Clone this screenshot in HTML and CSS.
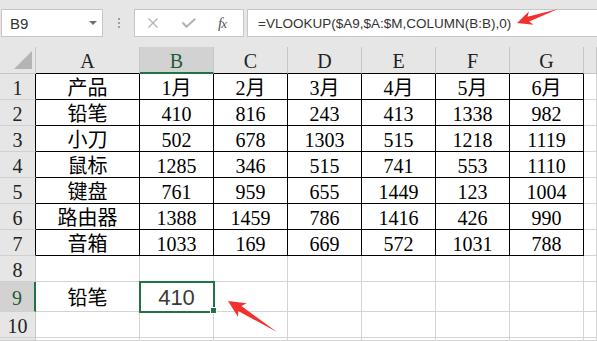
FILE: index.html
```html
<!DOCTYPE html>
<html>
<head>
<meta charset="utf-8">
<link rel="stylesheet" href="styles.css">
</head>
<body>
<div class="toolbar">
  <div class="namebox"><span>B9</span><span class="caret"></span></div>
  <div class="sep"><i></i><i></i><i></i></div>
  <div class="fbtns">
    <svg class="ic-x" width="10" height="10" viewBox="0 0 10 10"><path d="M0.5 0.5L9.5 9.5M9.5 0.5L0.5 9.5" stroke="#b4b4b4" stroke-width="1.4" fill="none"/></svg>
    <svg class="ic-ok" width="14" height="10" viewBox="0 0 14 10"><path d="M0.5 4.5L4.5 8.8L13.3 0.7" stroke="#b4b4b4" stroke-width="2" fill="none"/></svg>
    <span class="fx"><i>f</i><i class="x">x</i></span>
  </div>
  <div class="finput">=VLOOKUP($A9,$A:$M,COLUMN(B:B),0)</div>
</div>
<div class="sheet">
  <div class="ch corner"><span class="tri"></span></div>
  <div class="ch tb">A</div><div class="ch on">B</div><div class="ch tb">C</div><div class="ch tb">D</div><div class="ch tb">E</div><div class="ch tb">F</div><div class="ch tb">G</div><div class="ch"></div>

  <div class="rh tb">1</div>
  <div class="t">产品</div><div class="t">1月</div><div class="t">2月</div><div class="t">3月</div><div class="t">4月</div><div class="t">5月</div><div class="t">6月</div><div></div>

  <div class="rh tb">2</div>
  <div class="t">铅笔</div><div class="t">410</div><div class="t">816</div><div class="t">243</div><div class="t">413</div><div class="t">1338</div><div class="t">982</div><div></div>

  <div class="rh tb">3</div>
  <div class="t">小刀</div><div class="t">502</div><div class="t">678</div><div class="t">1303</div><div class="t">515</div><div class="t">1218</div><div class="t">1119</div><div></div>

  <div class="rh tb">4</div>
  <div class="t">鼠标</div><div class="t">1285</div><div class="t">346</div><div class="t">515</div><div class="t">741</div><div class="t">553</div><div class="t">1110</div><div></div>

  <div class="rh tb">5</div>
  <div class="t">键盘</div><div class="t">761</div><div class="t">959</div><div class="t">655</div><div class="t">1449</div><div class="t">123</div><div class="t">1004</div><div></div>

  <div class="rh tb">6</div>
  <div class="t">路由器</div><div class="t">1388</div><div class="t">1459</div><div class="t">786</div><div class="t">1416</div><div class="t">426</div><div class="t">990</div><div></div>

  <div class="rh tb">7</div>
  <div class="t">音箱</div><div class="t">1033</div><div class="t">169</div><div class="t">669</div><div class="t">572</div><div class="t">1031</div><div class="t">788</div><div></div>

  <div class="rh">8</div>
  <div></div><div></div><div></div><div></div><div></div><div></div><div></div><div></div>

  <div class="rh on">9</div>
  <div>铅笔</div><div class="sel">410<span class="handle"></span></div><div></div><div></div><div></div><div></div><div></div><div></div>

  <div class="rh">10</div>
  <div></div><div></div><div></div><div></div><div></div><div></div><div></div><div></div>

  <div class="rh"></div>
  <div></div><div></div><div></div><div></div><div></div><div></div><div></div><div></div>
</div>
<svg class="arrows" width="597" height="341" viewBox="0 0 597 341">
  <polygon fill="#f2312e" points="517,23 528.9,11.6 527.6,16.7 558,9 529.2,21.5 533.5,24.8"/>
  <polygon fill="#f2312e" points="228,301 246.7,303.3 241.4,306.0 277,332 238.2,311.0 238.1,316.9"/>
</svg>
</body>
</html>
```

FILE: styles.css
```css
* { box-sizing: border-box; }
body {
  margin: 0;
  width: 597px;
  height: 341px;
  overflow: hidden;
  background: #fff;
  position: relative;
  font-family: "Liberation Serif", "Noto Sans CJK SC", serif;
}
.toolbar {
  height: 47px;
  background: #e6e6e6;
  display: flex;
  align-items: flex-start;
  padding-top: 9px;
}
.namebox {
  margin-left: 1px;
  width: 102px;
  height: 28px;
  background: #fff;
  border: 1px solid #c6c6c6;
  display: flex;
  align-items: center;
  padding-left: 8px;
  font: 15px "Liberation Sans", sans-serif;
  color: #333;
}
.caret {
  margin-left: auto;
  margin-right: 5px;
  width: 0;
  height: 0;
  border-left: 4px solid transparent;
  border-right: 4px solid transparent;
  border-top: 4px solid #707070;
}
.sep {
  width: 31px;
  height: 28px;
  display: flex;
  flex-direction: column;
  align-items: center;
  gap: 2px;
  padding-top: 9px;
}
.sep i {
  display: block;
  width: 2px;
  height: 2px;
  background: #a0a0a0;
}
.fbtns {
  width: 110px;
  height: 28px;
  background: #fff;
  border: 1px solid #c6c6c6;
  display: flex;
  align-items: center;
}
.ic-x { margin-left: 13px; }
.ic-ok { margin-left: 24px; }
.fx {
  margin-left: 22px;
  font-family: "Liberation Serif", serif;
  font-size: 15px;
  color: #555;
  letter-spacing: -1px;
}
.fx .x { font-size: 13px; }
.finput {
  margin-left: 3px;
  flex: 1;
  height: 28px;
  background: #fff;
  border: 1px solid #c6c6c6;
  border-right: none;
  display: flex;
  align-items: center;
  padding-left: 10px;
  font: 13.5px "Liberation Sans", sans-serif;
  color: #333;
  white-space: nowrap;
}
.sheet {
  display: grid;
  grid-template-columns: 36px 104px repeat(6, 74px) 1fr;
  grid-template-rows: 27px repeat(8, 26px) 30px 26px 3px;
}
.sheet > div {
  border-right: 1px solid #d4d4d4;
  border-bottom: 1px solid #d4d4d4;
  display: flex;
  align-items: center;
  justify-content: center;
  font-size: 20px;
  line-height: 1;
  color: #000;
  padding-top: 2px;
  white-space: nowrap;
}
.sheet > .ch {
  background: #e6e6e6;
  border-right-color: #c6c6c6;
  border-bottom-color: #c6c6c6;
  color: #222;
}
.sheet > .ch.tb { border-bottom-color: #000; }
.sheet > .ch.on {
  background: #d2d2d2;
  border-bottom: 2px solid #217346;
  color: #1e5c38;
}
.sheet > .corner {
  align-items: flex-end;
  justify-content: flex-end;
  padding: 0 3px 4px 0;
}
.tri {
  display: block;
  width: 18px;
  height: 18px;
  background: #b4b4b4;
  clip-path: polygon(100% 0, 100% 100%, 0 100%);
}
.sheet > .rh {
  background: #e6e6e6;
  border-right-color: #c6c6c6;
  border-bottom-color: #d0d0d0;
  color: #222;
}
.sheet > .rh.tb { border-right-color: #000; }
.sheet > .rh.on {
  background: #d2d2d2;
  border-right: 2px solid #217346;
  color: #1e5c38;
}
.sheet > .t {
  border-right-color: #000;
  border-bottom-color: #000;
}
.sheet > .sel {
  position: relative;
  z-index: 1;
  outline: 2px solid #217346;
  outline-offset: -1px;
  font-family: "Liberation Sans", sans-serif;
  font-size: 22px;
  color: #3a3a3a;
}
.handle {
  position: absolute;
  right: -4px;
  bottom: -3px;
  width: 7px;
  height: 7px;
  background: #217346;
  border: 1px solid #fff;
}
.arrows {
  position: absolute;
  left: 0;
  top: 0;
  pointer-events: none;
}
```
